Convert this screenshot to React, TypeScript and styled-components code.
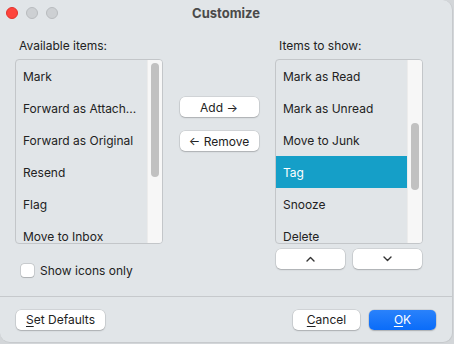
import React from "react";
import styled, { createGlobalStyle } from "styled-components";

const Global = createGlobalStyle`
  html, body { margin: 0; padding: 0; background: #d3d6d9; }
  body { font-family: Inter, "Noto Sans", sans-serif; -webkit-font-smoothing: antialiased; }
  * { box-sizing: border-box; }
`;

const Window = styled.div`
  width: 453px;
  height: 343px;
  background: #e1e5e8;
  border-right: 1px solid #c7cacd;
  border-bottom: 1px solid #c7cacd;
  border-radius: 0 10px 10px 10px;
  display: flex;
  flex-direction: column;
  overflow: hidden;
  color: #222;
  font-size: 12px;
  & > * { flex: none; }
`;

const TitleBar = styled.div`
  height: 28px;
  display: flex;
  align-items: center;
  position: relative;
  padding: 0 0 2px 6px;
  gap: 8px;
`;

const Light = styled.span<{ $c: string; $b: string }>`
  width: 12px;
  height: 12px;
  border-radius: 50%;
  background: ${(p) => p.$c};
  border: 0.5px solid ${(p) => p.$b};
`;

const Title = styled.div`
  position: absolute;
  left: 0;
  right: 0;
  top: 5px;
  text-align: center;
  font-weight: 700;
  font-size: 13px;
  color: #4a4a4a;
`;

const Body = styled.div`
  display: grid;
  grid-template-columns: 148px 1fr 148px;
  align-items: start;
  padding: 10px 29px 0 15px;
`;

const Column = styled.div`
  display: flex;
  flex-direction: column;
`;

const Label = styled.div`
  padding-left: 4px;
  height: 21px;
  line-height: 15px;
`;

const ListBox = styled.div`
  height: 185px;
  border: 1px solid #c3c6c9;
  border-radius: 4px;
  display: flex;
  overflow: hidden;
`;

const Rows = styled.div`
  flex: 1;
  display: flex;
  flex-direction: column;
`;

const Row = styled.div<{ $sel?: boolean }>`
  height: 32px;
  flex: none;
  display: flex;
  align-items: center;
  padding-left: 7px;
  white-space: nowrap;
  background: ${(p) => (p.$sel ? "#159fc8" : "transparent")};
  color: ${(p) => (p.$sel ? "#ffffff" : "#222")};
`;

const Track = styled.div`
  width: 15px;
  background: #f7f7f7;
  border-left: 1px solid #ececec;
  position: relative;
`;

const Thumb = styled.div<{ $top: number; $h: number }>`
  position: absolute;
  left: 3px;
  width: 8px;
  top: ${(p) => p.$top}px;
  height: ${(p) => p.$h}px;
  border-radius: 4px;
  background: #c1c1c1;
`;

const Middle = styled.div`
  display: flex;
  flex-direction: column;
  align-items: center;
  padding-top: 59px;
  gap: 14px;
`;

const Btn = styled.button<{ $w: number; $primary?: boolean }>`
  width: ${(p) => p.$w}px;
  height: 20px;
  border: none;
  border-radius: 5px;
  background: ${(p) => (p.$primary ? "linear-gradient(#2a82fb, #0a6cf9)" : "#ffffff")};
  color: ${(p) => (p.$primary ? "#ffffff" : "#222")};
  box-shadow: 0 0 0 0.5px rgba(0,0,0,0.14), 0 1px 1.5px rgba(0,0,0,0.18);
  font-family: inherit;
  font-size: 12px;
  padding: 0;
  display: flex;
  align-items: center;
  justify-content: center;
  gap: 3px;
`;

const ArrowRow = styled.div`
  display: flex;
  gap: 8px;
  margin-top: 5px;
  padding-left: 1px;
`;

const CheckRow = styled.div`
  display: flex;
  align-items: center;
  gap: 6px;
  padding-left: 6px;
  margin-top: 20px;
  height: 13px;
  white-space: nowrap;
`;

const Box = styled.span`
  width: 13px;
  height: 13px;
  border-radius: 3px;
  background: #fff;
  box-shadow: 0 0 0 0.5px rgba(0,0,0,0.2), 0 0.5px 1px rgba(0,0,0,0.15);
`;

const Separator = styled.div`
  height: 1px;
  background: #c6c9cc;
  margin-top: 19px;
`;

const Footer = styled.div`
  flex: 1 !important;
  display: flex;
  align-items: center;
  padding: 0 16px 0 16px;
  gap: 9px;
`;

const Spacer = styled.div`
  flex: 1;
`;

const U = styled.span`
  text-decoration: underline;
  text-underline-offset: 2px;
`;

const Chevron = ({ up }: { up?: boolean }) => (
  <svg width="9" height="6" viewBox="0 0 9 6">
    <path
      d={up ? "M1 5 L4.5 1.5 L8 5" : "M1 1 L4.5 4.5 L8 1"}
      fill="none"
      stroke="#333"
      strokeWidth="1.4"
      strokeLinecap="round"
      strokeLinejoin="round"
    />
  </svg>
);

const available = ["Mark", "Forward as Attach...", "Forward as Original", "Resend", "Flag", "Move to Inbox"];
const shown = ["Mark as Read", "Mark as Unread", "Move to Junk", "Tag", "Snooze", "Delete"];

export default function App() {
  return (
    <>
      <Global />
      <Window>
        <TitleBar>
          <Light $c="#fe443c" $b="#e0332c" />
          <Light $c="#cdd0d3" $b="#b8bbbe" />
          <Light $c="#cdd0d3" $b="#b8bbbe" />
          <Title>Customize</Title>
        </TitleBar>
        <Body>
          <Column>
            <Label>Available items:</Label>
            <ListBox>
              <Rows>
                {available.map((t) => (
                  <Row key={t}>{t}</Row>
                ))}
              </Rows>
              <Track>
                <Thumb $top={3} $h={114} />
              </Track>
            </ListBox>
            <CheckRow>
              <Box />
              <span>Show icons only</span>
            </CheckRow>
          </Column>
          <Middle>
            <Btn $w={79}>Add →</Btn>
            <Btn $w={79}>← Remove</Btn>
          </Middle>
          <Column>
            <Label>Items to show:</Label>
            <ListBox>
              <Rows>
                {shown.map((t) => (
                  <Row key={t} $sel={t === "Tag"}>
                    {t}
                  </Row>
                ))}
              </Rows>
              <Track>
                <Thumb $top={63} $h={67} />
              </Track>
            </ListBox>
            <ArrowRow>
              <Btn $w={69}>
                <Chevron up />
              </Btn>
              <Btn $w={69}>
                <Chevron />
              </Btn>
            </ArrowRow>
          </Column>
        </Body>
        <Separator />
        <Footer>
          <Btn $w={89}>
            <span>
              <U>S</U>et Defaults
            </span>
          </Btn>
          <Spacer />
          <Btn $w={67}>
            <span>
              <U>C</U>ancel
            </span>
          </Btn>
          <Btn $w={67} $primary>
            <span>
              <U>O</U>K
            </span>
          </Btn>
        </Footer>
      </Window>
    </>
  );
}
